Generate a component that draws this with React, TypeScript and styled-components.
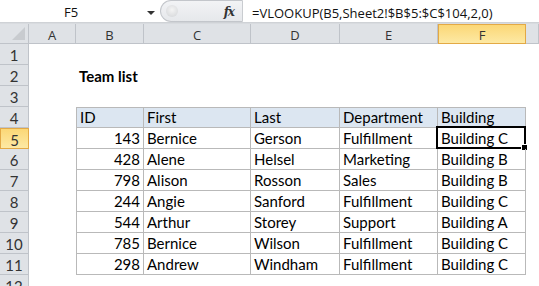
import React from "react";
import styled, { createGlobalStyle, css } from "styled-components";

const Global = createGlobalStyle`
  html, body { margin: 0; padding: 0; background: #fff; }
  body { width: 539px; height: 286px; overflow: hidden; }
`;

const Page = styled.div`
  width: 539px;
  height: 286px;
  overflow: hidden;
  background: #fff;
  display: flex;
  flex-direction: column;
`;

const FormulaBar = styled.div`
  display: flex;
  height: 22px;
  background: #fff;
  box-sizing: border-box;
`;

const NameBox = styled.div`
  width: 160px;
  position: relative;
  display: flex;
  align-items: center;
  justify-content: center;
  font-family: "Open Sans", "DejaVu Sans", sans-serif;
  font-size: 13px;
  color: #111;
  padding: 2px 18px 0 0;
  box-sizing: border-box;
`;

const Arrow = styled.span`
  position: absolute;
  right: 5px;
  top: 11px;
  width: 0;
  height: 0;
  border-left: 4px solid transparent;
  border-right: 4px solid transparent;
  border-top: 4px solid #333;
`;

const FxZone = styled.div`
  width: 83px;
  height: 22px;
  box-sizing: border-box;
  background: linear-gradient(#f2f3f5, #e6e8eb);
  border: 1px solid #c3c6cb;
  border-right: 1px solid #c9ccd0;
  border-radius: 11px 0 0 11px;
  display: flex;
  align-items: center;
  justify-content: space-between;
  padding: 0 8px 0 5px;
`;

const Knob = styled.span`
  width: 12px;
  height: 12px;
  border-radius: 50%;
  background: radial-gradient(circle at 50% 40%, #f4f4f4, #d2d4d7);
`;

const Fx = styled.span`
  font-family: "DejaVu Serif", "Liberation Serif", serif;
  font-style: italic;
  font-weight: bold;
  font-size: 12px;
  color: #333;
  letter-spacing: -1px;
  padding-top: 2px;
`;

const FormulaText = styled.div`
  flex: 1;
  display: flex;
  align-items: center;
  padding: 3px 0 0 9px;
  font-family: "Open Sans", "DejaVu Sans", sans-serif;
  font-size: 13px;
  color: #111;
  white-space: nowrap;
`;

const Divider = styled.div`
  height: 5px;
  box-sizing: border-box;
  border-top: 1px solid #cfd2d6;
  border-bottom: 1px solid #d8dbdf;
  background: #fff;
`;

const Sheet = styled.div`
  display: grid;
  grid-template-columns: 29px 47px 68px 107px 89px 98px 88px 1fr;
  grid-template-rows: 20px;
  grid-auto-rows: 21px;
`;

const headerBase = css`
  box-sizing: border-box;
  background: #dfe2e6;
  border-right: 1px solid #bfc3c9;
  border-bottom: 1px solid #bfc3c9;
  display: flex;
  align-items: center;
  justify-content: center;
  color: #333;
  padding-top: 2px;
`;

const selectedHeader = css`
  background: linear-gradient(#fbd776, #fde9a4);
  border: 1px solid #e3a945;
  color: #333;
`;

const Corner = styled.div`
  ${headerBase};
  position: relative;
  &::after {
    content: "";
    position: absolute;
    right: 3px;
    bottom: 3px;
    width: 0;
    height: 0;
    border-left: 13px solid transparent;
    border-bottom: 13px solid #c8cbcf;
  }
`;

const ColHead = styled.div<{ $sel?: boolean }>`
  ${headerBase};
  font-family: "Open Sans", "DejaVu Sans", sans-serif;
  font-size: 13px;
  ${(p) => p.$sel && selectedHeader};
`;

const RowHead = styled.div<{ $sel?: boolean }>`
  ${headerBase};
  font-family: "Lato", "Open Sans", sans-serif;
  font-size: 15px;
  ${(p) => p.$sel && selectedHeader};
`;

const Cell = styled.div<{
  $table?: boolean;
  $head?: boolean;
  $first?: boolean;
  $top?: boolean;
  $num?: boolean;
  $bold?: boolean;
}>`
  box-sizing: border-box;
  position: relative;
  font-family: "Lato", "Liberation Sans", sans-serif;
  font-size: 15px;
  line-height: 18px;
  color: #000;
  display: flex;
  align-items: flex-end;
  padding: 0 3px 1px;
  white-space: nowrap;
  overflow: visible;
  justify-content: ${(p) => (p.$num ? "flex-end" : "flex-start")};
  font-weight: ${(p) => (p.$bold ? 700 : 400)};
  ${(p) =>
    p.$table &&
    css`
      border-right: 1px solid #b9b9b9;
      border-bottom: 1px solid #b9b9b9;
    `}
  ${(p) =>
    p.$first &&
    css`
      border-left: 1px solid #b9b9b9;
    `}
  ${(p) =>
    p.$top &&
    css`
      border-top: 1px solid #b9b9b9;
    `}
  ${(p) =>
    p.$head &&
    css`
      background: #dce6f1;
    `}
`;

const ActiveFrame = styled.span`
  position: absolute;
  left: -2px;
  top: -2px;
  right: -1px;
  bottom: -1px;
  border: 2px solid #000;
  pointer-events: none;
  &::after {
    content: "";
    position: absolute;
    right: -4px;
    bottom: -4px;
    width: 5px;
    height: 5px;
    background: #000;
    border: 1px solid #fff;
  }
`;

const cols = ["A", "B", "C", "D", "E", "F"];

const data: [string, string, string, string, string][] = [
  ["143", "Bernice", "Gerson", "Fulfillment", "Building C"],
  ["428", "Alene", "Helsel", "Marketing", "Building B"],
  ["798", "Alison", "Rosson", "Sales", "Building B"],
  ["244", "Angie", "Sanford", "Fulfillment", "Building C"],
  ["544", "Arthur", "Storey", "Support", "Building A"],
  ["785", "Bernice", "Wilson", "Fulfillment", "Building C"],
  ["298", "Andrew", "Windham", "Fulfillment", "Building C"],
];

const headers = ["ID", "First", "Last", "Department", "Building"];

export default function App() {
  const rows: React.ReactNode[] = [];

  const emptyRow = (n: number, content?: React.ReactNode) => {
    rows.push(<RowHead key={`rh${n}`}>{n}</RowHead>);
    rows.push(<Cell key={`a${n}`} />);
    rows.push(
      <Cell key={`b${n}`} $bold={!!content}>
        {content}
      </Cell>
    );
    for (let i = 0; i < 5; i++) rows.push(<Cell key={`e${n}-${i}`} />);
  };

  emptyRow(1);
  emptyRow(2, "Team list");
  emptyRow(3);

  rows.push(<RowHead key="rh4">4</RowHead>);
  rows.push(<Cell key="a4" />);
  headers.forEach((h, i) =>
    rows.push(
      <Cell key={`h${i}`} $table $head $top $first={i === 0}>
        {h}
      </Cell>
    )
  );
  rows.push(<Cell key="g4" />);

  data.forEach((r, ri) => {
    const n = ri + 5;
    rows.push(
      <RowHead key={`rh${n}`} $sel={n === 5}>
        {n}
      </RowHead>
    );
    rows.push(<Cell key={`a${n}`} />);
    r.forEach((v, ci) =>
      rows.push(
        <Cell key={`c${n}-${ci}`} $table $first={ci === 0} $num={ci === 0}>
          {v}
          {n === 5 && ci === 4 && <ActiveFrame />}
        </Cell>
      )
    );
    rows.push(<Cell key={`g${n}`} />);
  });

  emptyRow(12);

  return (
    <Page>
      <Global />
      <FormulaBar>
        <NameBox>
          F5
          <Arrow />
        </NameBox>
        <FxZone>
          <Knob />
          <Fx>fx</Fx>
        </FxZone>
        <FormulaText>=VLOOKUP(B5,Sheet2!$B$5:$C$104,2,0)</FormulaText>
      </FormulaBar>
      <Divider />
      <Sheet>
        <Corner />
        {cols.map((c) => (
          <ColHead key={c} $sel={c === "F"}>
            {c}
          </ColHead>
        ))}
        <ColHead />
        {rows}
      </Sheet>
    </Page>
  );
}
